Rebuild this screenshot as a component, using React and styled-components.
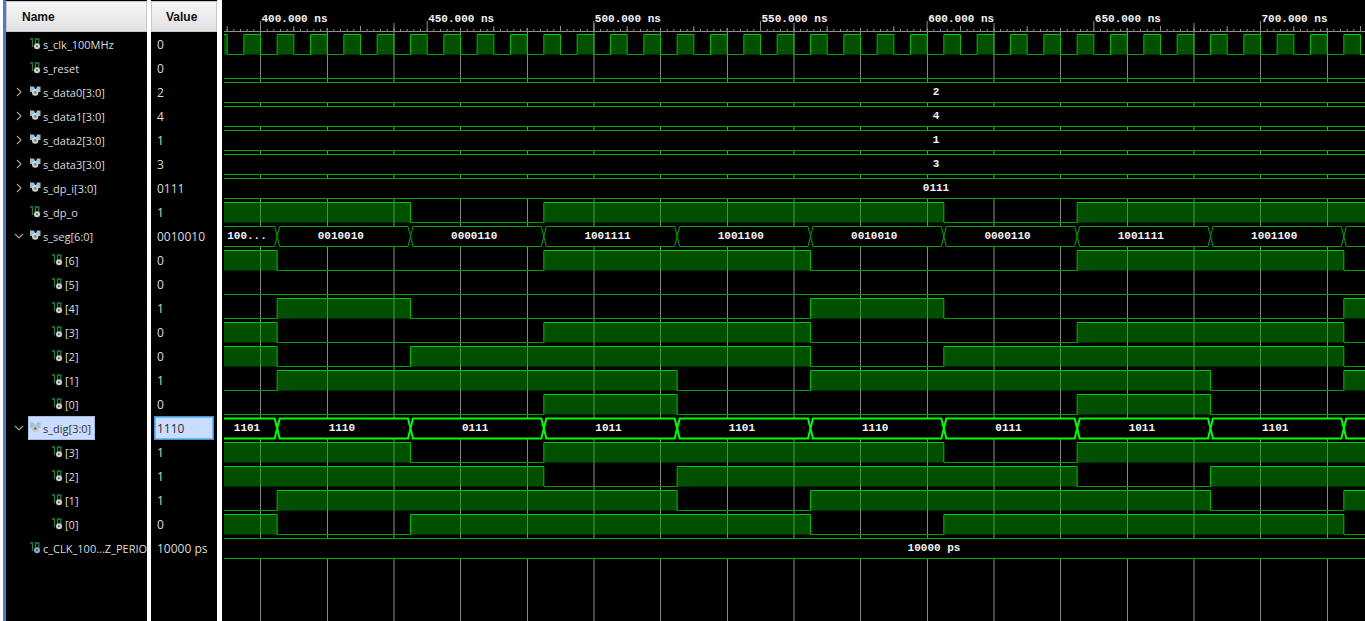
import React from "react";
import styled, { createGlobalStyle } from "styled-components";

const PX_PER_NS = 10 / 3;
const VIEW_START = 389;
const RULER_HEIGHT = 34;
const ROW_HEIGHT = 24;
const WAVE_HEIGHT = 20;
const END = 900;

const timeToX = (ns) => 38.5 + (ns - 400) * PX_PER_NS;
const LEFT = 2;
const clampX = (ns) => Math.max(LEFT, timeToX(ns));

const range = (from, to, step) => {
  const list = [];
  for (let t = from; t <= to; t += step) list.push(t);
  return list;
};

const STEPS = [VIEW_START, 405, 445, 485, 525, 565, 605, 645, 685, 725, END];
const whole = (text, shift) => ({ type: "bus", values: [text], shift });
const bits = (pattern) => ({ type: "bit", pattern });

const SIGNALS = [
  { name: "s_clk_100MHz", value: "0", wave: { type: "clock" } },
  { name: "s_reset", value: "0", wave: bits("0000000000") },
  { name: "s_data0[3:0]", value: "2", bus: true, tree: "closed", wave: whole("2") },
  { name: "s_data1[3:0]", value: "4", bus: true, tree: "closed", wave: whole("4") },
  { name: "s_data2[3:0]", value: "1", bus: true, tree: "closed", wave: whole("1") },
  { name: "s_data3[3:0]", value: "3", bus: true, tree: "closed", wave: whole("3") },
  { name: "s_dp_i[3:0]", value: "0111", bus: true, tree: "closed", wave: whole("0111") },
  { name: "s_dp_o", value: "1", wave: bits("1101110111") },
  {
    name: "s_seg[6:0]", value: "0010010", bus: true, tree: "open",
    wave: {
      type: "bus", shift: -3,
      values: ["100...", "0010010", "0000110", "1001111", "1001100", "0010010", "0000110", "1001111", "1001100", ""],
    },
  },
  { name: "[6]", value: "0", child: true, wave: bits("1001100110") },
  { name: "[5]", value: "0", child: true, wave: bits("0000000000") },
  { name: "[4]", value: "1", child: true, wave: bits("0100010001") },
  { name: "[3]", value: "0", child: true, wave: bits("1001100110") },
  { name: "[2]", value: "0", child: true, wave: bits("1011101110") },
  { name: "[1]", value: "1", child: true, wave: bits("0111011101") },
  { name: "[0]", value: "0", child: true, wave: bits("0001000100") },
  {
    name: "s_dig[3:0]", value: "1110", bus: true, tree: "open", selected: true,
    wave: {
      type: "bus", shift: -2,
      values: ["1101", "1110", "0111", "1011", "1101", "1110", "0111", "1011", "1101", ""],
    },
  },
  { name: "[3]", value: "1", child: true, wave: bits("1101110111") },
  { name: "[2]", value: "1", child: true, wave: bits("1110111011") },
  { name: "[1]", value: "1", child: true, wave: bits("0111011101") },
  { name: "[0]", value: "0", child: true, wave: bits("1011101110") },
  { name: "c_CLK_100...Z_PERIO", value: "10000 ps", constant: true, wave: whole("10000 ps", -2) },
];

const GlobalStyle = createGlobalStyle`
  * { box-sizing: border-box; }
  body { margin: 0; background: #000; }
`;

const Viewer = styled.main`
  display: flex;
  min-height: 100vh;
  overflow: hidden;
  background: #000;
  border-left: 3px solid #fff;
  font-family: "Open Sans", "Noto Sans", sans-serif;
  font-size: 12px;
  color: #dcdcdc;
`;

const SignalPanel = styled.section`
  display: flex;
  flex: none;
  width: 219px;
  border-left: 3px solid #4a7cc8;
`;

const Column = styled.div`
  flex: none;
  width: ${(p) => p.$width}px;
  overflow: hidden;
  border-right: ${(p) => p.$divider}px solid #fff;
`;

const ColumnHeader = styled.h2`
  display: flex;
  align-items: center;
  height: 31px;
  margin: 1px 0 0;
  padding-left: ${(p) => p.$indent}px;
  background: linear-gradient(#f6f6f6, #e2e2e4);
  border: 1px solid #c8c8ca;
  color: #111;
  font: bold 12px/16px "Liberation Sans", Arial, sans-serif;
`;

const RowList = styled.ul`
  margin: 0;
  padding: 0;
  list-style: none;
`;

const NameRow = styled.li`
  display: flex;
  align-items: center;
  height: ${ROW_HEIGHT}px;
  padding-left: ${(p) => (p.$child ? 44 : 6)}px;
  font-size: 11px;
  white-space: nowrap;
`;

const Expander = styled.button`
  display: flex;
  flex: none;
  align-items: center;
  justify-content: center;
  width: 14px;
  height: 16px;
  margin-right: 2px;
  padding: 0;
  border: 0;
  background: none;
  color: #a0a0a0;
`;

const ExpanderGap = styled.span`
  flex: none;
  width: 16px;
`;

const SignalLabel = styled.span`
  display: flex;
  align-items: center;
  height: 24px;
  gap: 1px;
  padding: 0 3px 0 1px;
  border: 1px solid ${(p) => (p.$selected ? "#a8bce0" : "transparent")};
  background: ${(p) => (p.$selected ? "#cadcff" : "none")};
  color: ${(p) => (p.$selected ? "#303030" : "inherit")};

  svg { flex: none; }
`;

const ValueRow = styled.li`
  display: flex;
  align-items: center;
  height: ${ROW_HEIGHT}px;
  margin: 0 3px;
  padding-left: 2px;
  border: 1px solid ${(p) => (p.$selected ? "#3c96dc" : "transparent")};
  box-shadow: ${(p) => (p.$selected ? "inset 0 0 0 1px #7ab8ee" : "none")};
  background: ${(p) => (p.$selected ? "#cadcff" : "none")};
  color: ${(p) => (p.$selected ? "#303030" : "inherit")};
  white-space: nowrap;
`;

const WavePanel = styled.section`
  flex: 1;
  min-width: 0;
  overflow: hidden;
`;

const WaveChart = styled.svg`
  display: block;
  width: 100%;
  height: 100%;
  min-height: 600px;
  font: bold 11px "Liberation Mono", monospace;
  fill: #f4f4f4;
`;

function Chevron({ open }) {
  return (
    <svg width="10" height="10" viewBox="0 0 10 10" fill="none" stroke="currentColor" strokeWidth="1.2">
      <path d={open ? "M1 3l4 4 4-4" : "M3 1l4 4-4 4"} />
    </svg>
  );
}

function WireIcon({ constant }) {
  return (
    <svg width="12" height="12" viewBox="0 0 12 12" fill="none">
      <path d="M0 1H2.500V9M5.500 6V1H8.800V6" stroke="#2a8040" strokeWidth="1.3" />
      <circle cx="7" cy="8.200" r="3" fill={constant ? "#8ea6d8" : "#d2d2d2"} />
      <circle cx="7" cy="8.200" r="1.100" fill={constant ? "#3c5490" : "#707070"} />
    </svg>
  );
}

function BusIcon({ selected }) {
  return (
    <svg width="12" height="12" viewBox="0 0 12 12" fill="none">
      <path d="M0 0.500H4L5 3H6L7 0.500H10.500V6H8L5.200 9 2 6H0z" fill={selected ? "#98c6d6" : "#94c2dc"} />
      <circle cx="5.200" cy="6.500" r="3.200" fill={selected ? "#c4c4c4" : "#d2d2d2"} />
      <circle cx="5.200" cy="6.500" r="1.200" fill="#707070" />
    </svg>
  );
}

function Ruler() {
  return (
    <g>
      <g stroke="#8c8c8c">
        {range(390, END, 2).map((t) => (
          <line key={t} x1={timeToX(t)} x2={timeToX(t)} y1="29" y2="31" />
        ))}
        {range(390, END, 10).map((t) => (
          <line key={t} x1={timeToX(t)} x2={timeToX(t)} y1={t % 50 === 0 ? 21 : t % 20 === 0 ? 28 : 26} y2="31" />
        ))}
        <line x1={LEFT} x2="100%" y1="31.500" y2="31.500" />
      </g>
      {range(400, END, 50).map((t) => (
        <text key={t} x={timeToX(t) + 1} y="22">{`${t}.000 ns`}</text>
      ))}
    </g>
  );
}

function Grid() {
  return (
    <g shapeRendering="crispEdges">
      {range(400, END, 20).map((t) => {
        const wide = t % 60 === 20;
        return (
          <line
            key={t}
            x1={wide ? Math.round(timeToX(t)) : timeToX(t)}
            x2={wide ? Math.round(timeToX(t)) : timeToX(t)}
            y1={wide ? 23 : 28}
            y2="100%"
            stroke={wide ? "#484848" : "#868686"}
            strokeWidth={wide ? 2 : 1}
          />
        );
      })}
    </g>
  );
}

function BitWave({ segments, top }) {
  const low = top + WAVE_HEIGHT;
  return (
    <g>
      {segments.map(({ from, to, high }, i) => {
        const x1 = clampX(from);
        const x2 = timeToX(to);
        return (
          <g key={from}>
            {high && <rect x={x1} y={top} width={x2 - x1} height={WAVE_HEIGHT} fill="#00a000" fillOpacity="0.5" />}
            <line x1={x1} x2={x2} y1={high ? top : low} y2={high ? top : low} stroke={high ? "#00c800" : "#00a000"} />
            {i > 0 && <line x1={x1} x2={x1} y1={top} y2={low} stroke="#00c000" />}
          </g>
        );
      })}
    </g>
  );
}

function BusWave({ values, shift = 0, top, selected }) {
  const low = top + WAVE_HEIGHT;
  const mid = top + WAVE_HEIGHT / 2;
  const single = values.length === 1;
  const half = 2.5;
  return (
    <g>
      <rect x="0" y={top} width="100%" height={WAVE_HEIGHT} fill="#000" />
      {values.map((text, i) => {
        const x1 = single ? LEFT : clampX(STEPS[i]);
        const x2 = single ? timeToX(END) : timeToX(STEPS[i + 1]);
        const start = i === 0 ? `M${x1} ${top}` : `M${x1} ${mid}L${x1 + half} ${top}`;
        const back = i === 0 ? `M${x1} ${low}` : `M${x1} ${mid}L${x1 + half} ${low}`;
        const center = single ? 714 + shift : i === 0 ? 25 : (x1 + x2) / 2 + shift;
        return (
          <g key={i}>
            <path
              d={`${start}H${x2 - half}L${x2} ${mid}${back}H${x2 - half}L${x2} ${mid}`}
              fill="none"
              stroke={selected ? "#00ff00" : "#00a800"}
              strokeWidth={selected ? 2 : 1}
            />
            <text x={center} y={top + 12} textAnchor="middle">{text}</text>
          </g>
        );
      })}
    </g>
  );
}

function clockSegments() {
  return range(385, END, 5)
    .map((t) => ({ from: t, to: t + 5, high: t % 10 === 5 }))
    .filter((s) => s.to > VIEW_START);
}

function patternSegments(pattern) {
  const segments = [];
  [...pattern].forEach((bit, i) => {
    const high = bit === "1";
    const last = segments[segments.length - 1];
    if (last && last.high === high) last.to = STEPS[i + 1];
    else segments.push({ from: STEPS[i], to: STEPS[i + 1], high });
  });
  return segments;
}

function Wave({ signal, top }) {
  const { wave, selected } = signal;
  if (wave.type === "clock") return <BitWave segments={clockSegments()} top={top} />;
  if (wave.type === "bit") return <BitWave segments={patternSegments(wave.pattern)} top={top} />;
  return <BusWave values={wave.values} shift={wave.shift} top={top} selected={selected} />;
}

export default function App() {
  return (
    <Viewer>
      <GlobalStyle />
      <SignalPanel>
        <Column $width={145} $divider={4}>
          <ColumnHeader $indent={15}>Name</ColumnHeader>
          <RowList>
            {SIGNALS.map((s, i) => (
              <NameRow key={i} $child={s.child}>
                {s.tree ? (
                  <Expander aria-label={`Toggle ${s.name}`} aria-expanded={s.tree === "open"}>
                    <Chevron open={s.tree === "open"} />
                  </Expander>
                ) : (
                  !s.child && <ExpanderGap />
                )}
                <SignalLabel $selected={s.selected}>
                  {s.bus ? <BusIcon selected={s.selected} /> : <WireIcon constant={s.constant} />}
                  {s.name}
                </SignalLabel>
              </NameRow>
            ))}
          </RowList>
        </Column>
        <Column $width={71} $divider={5}>
          <ColumnHeader $indent={14}>Value</ColumnHeader>
          <RowList>
            {SIGNALS.map((s, i) => (
              <ValueRow key={i} $selected={s.selected}>{s.value}</ValueRow>
            ))}
          </RowList>
        </Column>
      </SignalPanel>
      <WavePanel>
        <WaveChart role="img" aria-label="Signal waveforms">
          <Grid />
          <Ruler />
          {SIGNALS.map((s, i) => (
            <Wave key={i} signal={s} top={RULER_HEIGHT + 0.5 + i * ROW_HEIGHT} />
          ))}
        </WaveChart>
      </WavePanel>
    </Viewer>
  );
}
